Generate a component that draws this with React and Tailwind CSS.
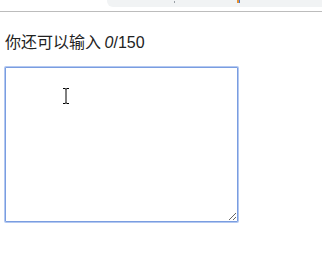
export default function App() {
  return (
    <div className="relative flex h-[268px] w-[322px] flex-col overflow-hidden bg-white" style={{ fontFamily: '"Noto Sans CJK SC", "Noto Sans", sans-serif' }}>
      {/* browser chrome remnant */}
      <div className="flex h-[12px] items-start border-b border-[#bcbcbc]">
        <div className="ml-[107px] flex h-[7px] flex-1 items-start rounded-bl-[6px] bg-[#f1f3f4]">
          <span className="ml-[67px] mt-[1px] h-[2px] w-[1px] bg-[#9aa0a6]" />
          <span className="ml-[62px] h-[3px] w-[2px] bg-[#e8912d]" />
          <span className="h-[3px] w-[1px] bg-[#3b78e7]" />
        </div>
      </div>

      <p className="ml-[5px] mt-[17px] text-[16px] leading-[24px] text-[#222]">
        你还可以输入 <i className="italic" style={{ fontFamily: '"Liberation Sans", Arial, sans-serif' }}>0</i>
        <span style={{ fontFamily: '"Liberation Sans", Arial, sans-serif' }}>/150</span>
      </p>

      <textarea
        className="mt-[12px] ml-[5px] block h-[155px] w-[233px] resize rounded-[1px] border border-[#7a9de0] bg-white p-[2px] text-[13px] outline-none shadow-[0_0_0_1px_#b3c8f1]"
      />

      {/* mouse I-beam cursor */}
      <svg className="pointer-events-none absolute left-[61px] top-[87px]" width="10" height="18" viewBox="0 0 10 18">
        <path d="M2 1.5h2.5M5.5 1.5H8M5 2v14M2 16.5h2.5M5.5 16.5H8" stroke="#000" strokeWidth="1" fill="none" />
        <path d="M4.5 2h1M4.5 16h1" stroke="#000" strokeWidth="1" />
      </svg>
    </div>
  )
}
